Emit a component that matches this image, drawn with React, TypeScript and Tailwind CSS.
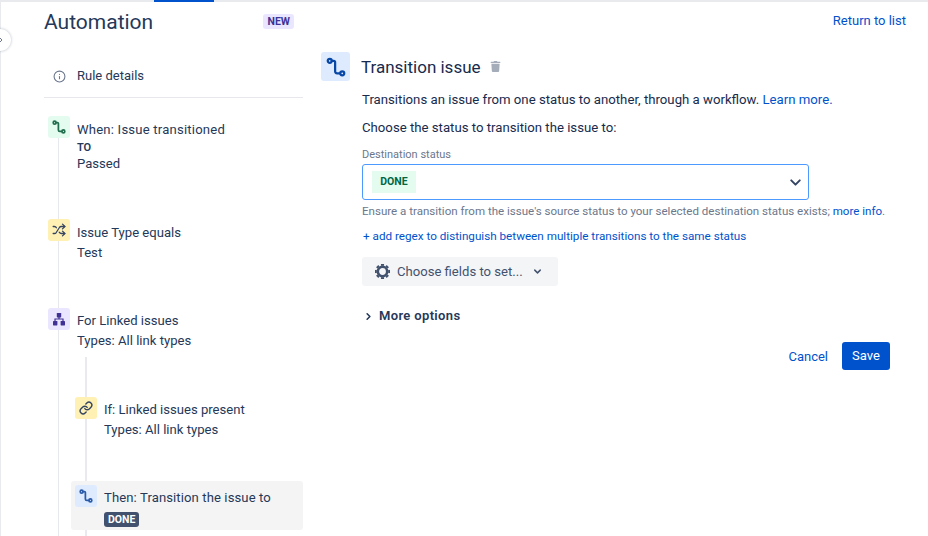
import { ChevronDown, ChevronRight, Info, Link, Shuffle } from 'lucide-react'
import { FaTrash } from 'react-icons/fa'

function TransitionIcon({ size, color, weight = 1.8 }: { size: number; color: string; weight?: number }) {
  return (
    <svg width={size} height={size} viewBox="0 0 16 16" fill="none" stroke={color} strokeWidth={weight} strokeLinecap="round">
      <circle cx="3" cy="3" r="1.6" />
      <path d="M4.6 3H6.2C6.9 3 7.3 3.4 7.3 4.1V11.4C7.3 12.4 7.9 13 8.9 13H11.2" />
      <circle cx="13" cy="13" r="1.6" />
    </svg>
  )
}

function TreeIcon() {
  return (
    <svg width="14" height="14" viewBox="0 0 14 14" fill="#403294">
      <rect x="4.8" y="1" width="4.4" height="4.4" rx="0.6" />
      <rect x="1" y="9" width="4.4" height="4.4" rx="0.6" />
      <rect x="8.6" y="9" width="4.4" height="4.4" rx="0.6" />
      <path d="M6.4 5h1.2v1.4H11.6v3h-1.2V7.6H3.6v1.8H2.4v-3H6.4z" />
    </svg>
  )
}

function GearIcon() {
  const teeth = [0, 45, 90, 135, 180, 225, 270, 315]
  return (
    <svg width="17" height="17" viewBox="0 0 24 24" fill="none" stroke="#42526E" strokeWidth="3.6">
      <circle cx="12" cy="12" r="6.6" />
      {teeth.map((a) => (
        <line key={a} x1="12" y1="4" x2="12" y2="1.4" strokeWidth="4.4" transform={`rotate(${a} 12 12)`} />
      ))}
    </svg>
  )
}

function Step({
  icon,
  bg,
  title,
  children,
  className,
  textClass = 'pt-[4px]',
}: {
  icon: React.ReactNode
  bg: string
  title: string
  children: React.ReactNode
  className: string
  textClass?: string
}) {
  return (
    <div className={`flex gap-[7px] ${className}`}>
      <div className={`relative z-10 flex h-[22px] w-[22px] shrink-0 items-center justify-center rounded-[3px] ${bg}`}>{icon}</div>
      <div className={`text-[13.1px] leading-[20px] text-[#253858] ${textClass}`}>
        <div>{title}</div>
        {children}
      </div>
    </div>
  )
}

function Sidebar() {
  return (
    <div className="flex w-[259px] shrink-0 flex-col">
      <div className="flex h-[39px] items-center justify-between">
        <h1 className="pt-[1px] text-[21px] font-normal leading-[28px] text-[#253858]">Automation</h1>
        <span className="mr-[9px] rounded-[3px] bg-[#EAE6FF] px-[4px] text-[10.5px] font-bold leading-[15px] text-[#403294]">NEW</span>
      </div>
      <div className="flex h-[57px] items-center gap-[11px] border-b border-[#E6E8EC] pl-[9px] pt-[14px] text-[13px] text-[#253858]">
        <Info size={13} strokeWidth={2} className="text-[#6B778C]" />
        <span>Rule details</span>
      </div>

      <div className="relative flex-1 pl-[4px] pt-[18px]">
        {/* connector lines sit behind the step icons */}
        <div className="absolute bottom-0 left-[14px] top-[30px] w-[1px] bg-[#E6E8EC]" />
        <div className="absolute bottom-0 left-[41px] top-[259px] w-[2px] bg-[#E9EAF0]" />

        <Step
          className="h-[103px] tracking-[0.2px]"
          bg="bg-[#E3FCEF]"
          title="When: Issue transitioned"
          icon={<TransitionIcon size={14} color="#216E4E" weight={2} />}
        >
          <div className="text-[11px] font-semibold leading-[16px] tracking-normal">TO</div>
          <div className="leading-[15px] tracking-normal">Passed</div>
        </Step>
        <Step
          className="h-[89px]"
          bg="bg-[#FFF0B3]"
          title="Issue Type equals"
          icon={<Shuffle size={14} strokeWidth={2.2} className="text-[#344563]" />}
        >
          <div>Test</div>
        </Step>
        <Step
          className="h-[89px]"
          bg="bg-[#EAE6FF]"
          title="For Linked issues"
          textClass="pt-[3px]"
          icon={<TreeIcon />}
        >
          <div>Types: All link types</div>
        </Step>
        <Step
          className="ml-[27px] h-[84px]"
          bg="bg-[#FFF0B3]"
          title="If: Linked issues present"
          textClass="pt-[3px]"
          icon={<Link size={14} strokeWidth={2.4} className="text-[#344563]" />}
        >
          <div>Types: All link types</div>
        </Step>
        <div className="relative ml-[23px] rounded-[3px] bg-[#F4F4F5] pb-[4px] pl-[4px] pt-[4px]">
          <Step
            className="h-[41px] tracking-[0.1px]"
            bg="bg-[#DEEBFF]"
            title="Then: Transition the issue to"
            textClass="pt-[3px]"
            icon={<TransitionIcon size={14} color="#2A5BA8" weight={2} />}
          >
            <div className="mt-[4px] w-fit rounded-[3px] bg-[#42526E] px-[4px] text-[10.5px] font-bold leading-[15px] tracking-normal text-white">DONE</div>
          </Step>
        </div>
      </div>
    </div>
  )
}

function Detail() {
  return (
    <div className="ml-[18px] flex min-w-0 flex-1 flex-col">
      <div className="flex justify-end pr-[22px] pt-[9px]">
        <a className="text-[13px] leading-[20px] text-[#0052CC]">Return to list</a>
      </div>

      <div className="mt-[21px] flex h-[29px] items-center">
        <div className="flex h-[29px] w-[29px] items-center justify-center rounded-[3px] bg-[#DEEBFF]">
          <TransitionIcon size={20} color="#0747A6" />
        </div>
        <h2 className="ml-[11px] text-[17px] font-normal leading-[24px] text-[#172B4D]">Transition issue</h2>
        <FaTrash size={11} className="mb-[1px] ml-[9px] text-[#A5ADBA]" />
      </div>

      <div className="pl-[41px] pr-[24px]">
        <p className="mt-[9px] text-[13.2px] leading-[20px] text-[#172B4D]">
          Transitions an issue from one status to another, through a workflow. <a className="text-[#0052CC]">Learn more.</a>
        </p>
        <p className="mt-[8px] text-[13.2px] leading-[20px] text-[#172B4D]">Choose the status to transition the issue to:</p>
        <div className="mt-[9px] text-[11px] leading-[16px] text-[#6B778C]">Destination status</div>
        <div className="mt-[1px] flex h-[36px] w-[447px] items-center justify-between rounded-[3px] border border-[#4C9AFF] pl-[9px] pr-[4px]">
          <span className="flex h-[22px] w-[44px] items-center justify-center bg-[#E3FCEF] text-[10.5px] font-bold text-[#006644]">DONE</span>
          <ChevronDown size={17} strokeWidth={2.8} className="text-[#344563]" />
        </div>
        <p className="mt-[3px] text-[11.56px] leading-[16px] text-[#6B778C]">
          Ensure a transition from the issue's source status to your selected destination status exists; <a className="text-[#0052CC]">more info</a>.
        </p>
        <a className="mt-[9px] block pl-[1px] text-[11.7px] leading-[16px] text-[#0052CC]">+ add regex to distinguish between multiple transitions to the same status</a>
        <button className="mt-[13px] flex h-[29px] w-[196px] items-center rounded-[3px] bg-[#F4F5F7] pl-[12px] text-[13.1px] text-[#42526E]">
          <GearIcon />
          <span className="ml-[6px]">Choose fields to set...</span>
          <ChevronDown size={11} strokeWidth={3.2} className="ml-[9px]" />
        </button>
        <div className="mt-[20px] flex h-[20px] items-center text-[13px] font-semibold tracking-[0.35px] text-[#253858]">
          <ChevronRight size={11} strokeWidth={3.4} className="ml-[1px]" />
          <span className="ml-[5px]">More options</span>
        </div>
        <div className="mt-[16px] flex w-[528px] items-center justify-end gap-[14px]">
          <a className="pt-[1px] text-[13px] text-[#0052CC]">Cancel</a>
          <button className="h-[28px] w-[48px] rounded-[3px] bg-[#0052CC] text-[13px] text-white">Save</button>
        </div>
      </div>
    </div>
  )
}

export default function App() {
  return (
    <div className="relative flex h-[536px] w-[928px] flex-col overflow-hidden bg-white font-['Roboto','Noto_Sans',sans-serif]">
      <div className="h-[2px] shrink-0 bg-[#E8EAEE]">
        <div className="ml-[154px] h-[2px] w-[60px] bg-[#0052CC]" />
      </div>
      <div className="flex min-h-0 flex-1 border-l-[1px] border-[#E8EAEE] pl-[43px]">
        <Sidebar />
        <Detail />
      </div>
      {/* collapse handle over the left edge */}
      <div className="absolute left-[-11px] top-[29px] flex h-[22px] w-[22px] items-center justify-center rounded-full bg-white shadow-[0_0_3px_rgba(9,30,66,0.3)]">
        <ChevronRight size={8} strokeWidth={3} className="ml-[1px] text-[#6B778C]" />
      </div>
    </div>
  )
}
